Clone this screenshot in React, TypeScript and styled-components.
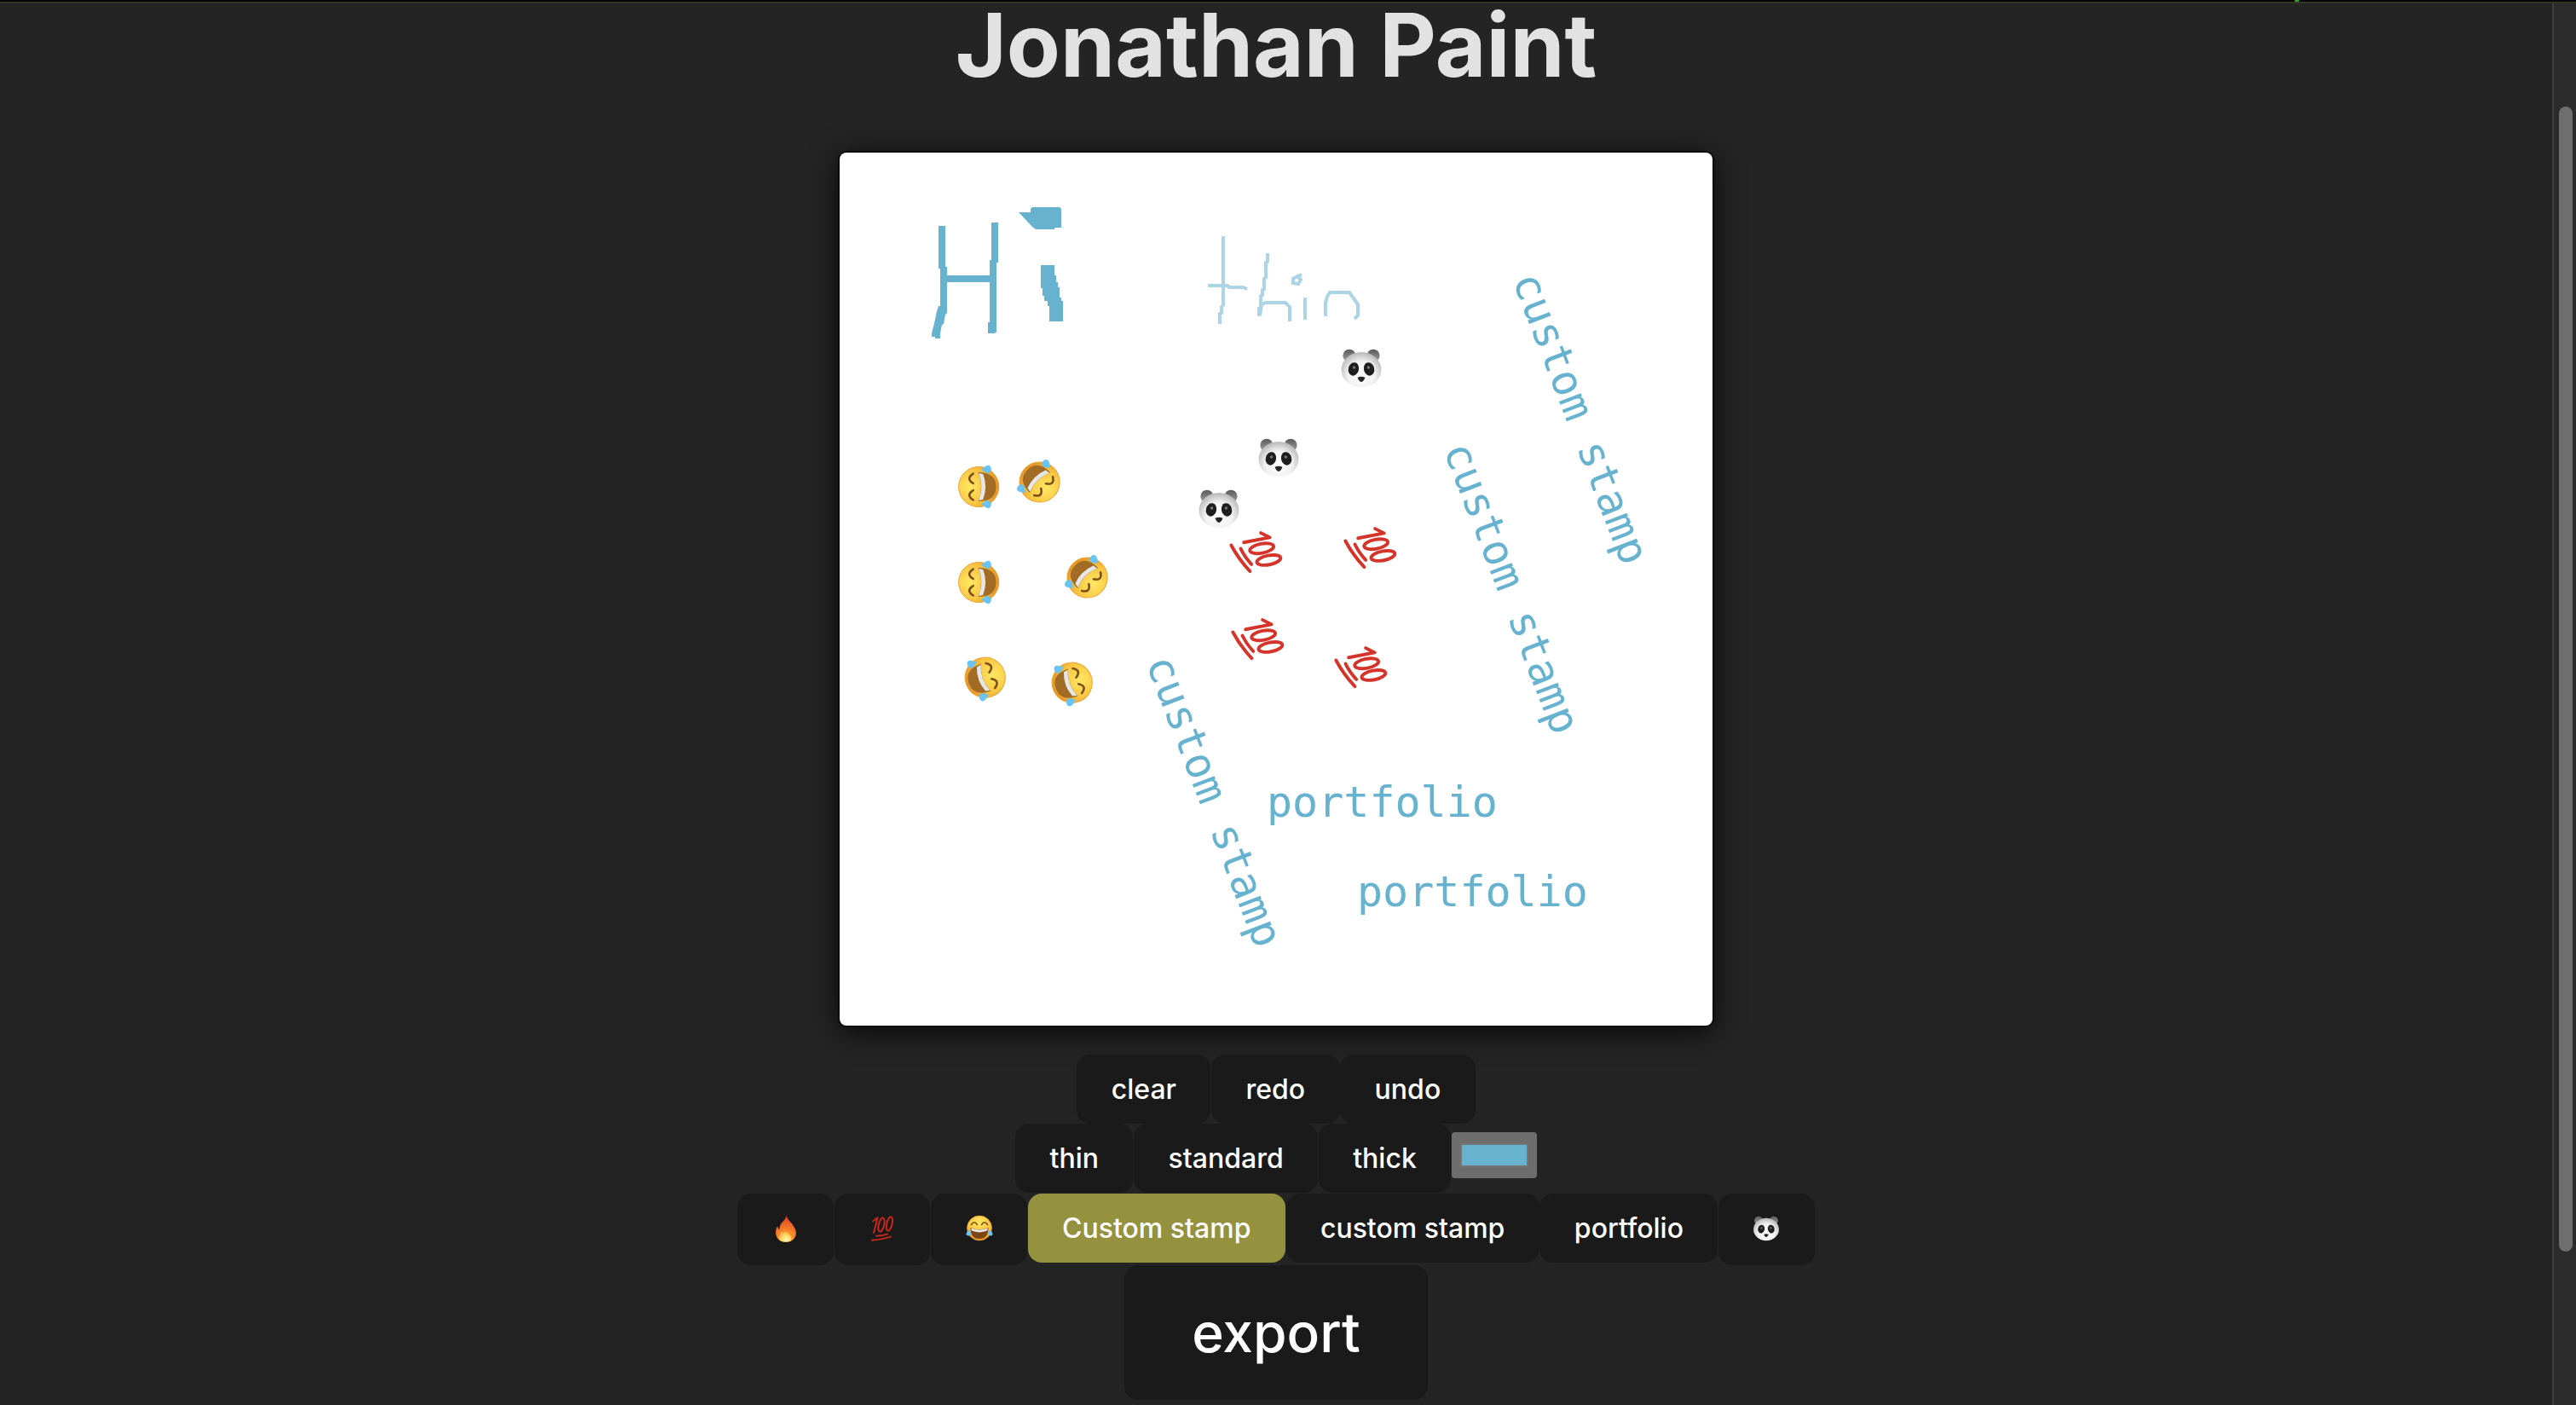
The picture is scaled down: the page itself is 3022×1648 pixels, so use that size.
import styled, { createGlobalStyle } from "styled-components";

const INK = "#67b2cf";

const GlobalStyle = createGlobalStyle`
  html, body {
    margin: 0;
    padding: 0;
    background: #242424;
    overflow: hidden;
  }
  body {
    font-family: Inter, "Liberation Sans", sans-serif;
    font-size: 32px;
  }
`;

const Frame = styled.div`
  width: 3022px;
  height: 1648px;
  display: flex;
  flex-direction: column;
  overflow: hidden;
  background: #242424;
`;

const TopStrip = styled.div`
  height: 2px;
  flex: none;
  background: #050505;
  border-bottom: 2px solid #2f3a26;
  display: flex;
`;

const StripTick = styled.div`
  margin-left: 2692px;
  width: 5px;
  height: 2px;
  background: #3f9a30;
`;

const Body = styled.div`
  flex: 1;
  display: flex;
  min-height: 0;
`;

const Main = styled.main`
  flex: 1;
  display: flex;
  flex-direction: column;
  align-items: center;
`;

const Title = styled.h1`
  margin: 0 0 77px;
  font-size: 103px;
  line-height: 98px;
  font-weight: 700;
  color: rgba(255, 255, 255, 0.87);
`;

const Canvas = styled.svg`
  display: block;
  flex: none;
  width: 1024px;
  height: 1024px;
  background: #fff;
  border-radius: 8px;
  box-shadow: 0 0 0 2px #0c0c0c, 0 6px 34px rgba(0, 0, 0, 0.85);
  margin-bottom: 34px;
`;

const Row = styled.div<{ $height: number }>`
  display: flex;
  align-items: flex-start;
  justify-content: center;
  gap: 0.7px;
  height: ${(p) => p.$height}px;
`;

const Button = styled.button<{ $active?: boolean }>`
  border-radius: 16px;
  border: 2px solid transparent;
  padding: 19.2px 38.4px;
  font-family: inherit;
  font-size: 32px;
  font-weight: 500;
  color: #fff;
  background: ${(p) => (p.$active ? "#94923f" : "#1a1a1a")};
  white-space: nowrap;
`;

const ExportButton = styled(Button)`
  font-size: 64px;
  padding: 38.4px 76.8px;
  border-radius: 16px;
`;

const EmojiIcon = styled.svg`
  display: block;
  width: 32px;
  height: 32px;
  margin: 4px 0 5.6px;
`;

const Swatch = styled.div`
  margin-top: 10px;
  width: 100px;
  height: 54px;
  box-sizing: border-box;
  padding: 13px 10px;
  background: #6d6d6d;
  border-radius: 4px;
  display: flex;
`;

const SwatchInner = styled.div`
  flex: 1;
  background: ${INK};
  border: 2px solid #757575;
`;

const StampText = styled.text`
  font-family: "DejaVu Sans Mono", monospace;
  font-size: 50px;
  fill: ${INK};
`;

const GradientDefs = styled.svg`
  display: block;
  width: 0;
  height: 0;
`;

const ScrollTrack = styled.div`
  flex: none;
  width: 28px;
  box-sizing: border-box;
  background: #2c2c2c;
  border-left: 2px solid #3f3f3f;
  padding: 121px 4px 0 6px;
`;

const ScrollThumb = styled.div`
  height: 1343px;
  background: #6e6e6e;
  border-radius: 8px;
`;

function Fire() {
  return (
    <g>
      <path
        d="M16.5 0C17 5 22 8 24.6 12.5C27.5 17 29 21 27 25.6C25 30 21 32 16 32C11 32 7 30 5 25.6C3.4 21.6 3.6 17 6.2 13C6.4 15.4 7.2 16.6 8.6 17.2C8 12 11 9.4 13 7.2C15 5 16.4 3 16.5 0Z"
        fill="url(#fireGlow)"
      />
      <path d="M9 30C6.5 25 9 21 12 18C12 21 13 22 15 18.5C19 22 24 25 22 30C20 32 12 32 9 30Z" fill="url(#fireCore)" />
    </g>
  );
}

function Hundred({ color, weight = 2 }: { color: string; weight?: number }) {
  return (
    <g fill="none" stroke={color} strokeLinecap="round" strokeWidth={weight}>
      <path d="M5 7.5L10.5 3.2L6 21" strokeLinejoin="round" />
      <ellipse cx="15" cy="11.5" rx="3.2" ry="8.4" transform="rotate(14 15 11.5)" />
      <ellipse cx="24.4" cy="10.5" rx="3.2" ry="8.4" transform="rotate(14 24.4 10.5)" />
      <path d="M9 24.8Q15 24.8 22 22.6" />
      <path d="M4 29.8Q15 29.2 26 25.6" />
    </g>
  );
}

function Laugh({ mouth = "#7c4513" }: { mouth?: string }) {
  return (
    <g>
      <circle cx="16" cy="15.5" r="14.5" fill="url(#laughFace)" stroke="#e8a032" strokeWidth="0.6" />
      <path d="M6.5 11.5Q10 6 13.5 11.5M18.5 11.5Q22 6 25.5 11.5" fill="none" stroke="#7a5018" strokeWidth="1.6" strokeLinecap="round" />
      <path d="M5.5 15Q16 19.5 26.5 15Q26.5 28 16 28Q5.5 28 5.5 15Z" fill={mouth} />
      <path d="M6.2 15.4Q16 19.4 25.8 15.4L25.2 18.6Q16 22.2 6.8 18.6Z" fill="#e4e6e8" />
      <path d="M3.5 17.5C5.5 20 6.5 21.5 6 23C5.2 24.8 2 25 .8 23.4C-.2 21.8 1.6 19.5 3.5 17.5Z" fill="#69c3f5" />
      <path d="M28.5 17.5C26.5 20 25.5 21.5 26 23C26.8 24.8 30 25 31.2 23.4C32.2 21.8 30.4 19.5 28.5 17.5Z" fill="#69c3f5" />
    </g>
  );
}

function Panda() {
  return (
    <g>
      <circle cx="7" cy="6.5" r="4.8" fill="url(#pandaEar)" />
      <circle cx="25" cy="6.5" r="4.8" fill="url(#pandaEar)" />
      <ellipse cx="16" cy="17" rx="15" ry="13.2" fill="url(#pandaHead)" />
      <ellipse cx="10.2" cy="16.6" rx="3.9" ry="5" transform="rotate(14 10.2 16.6)" fill="#1f1f1f" />
      <ellipse cx="21.8" cy="16.6" rx="3.9" ry="5" transform="rotate(-14 21.8 16.6)" fill="#1f1f1f" />
      <circle cx="10.6" cy="15.4" r="1.1" fill="#777" />
      <circle cx="21.4" cy="15.4" r="1.1" fill="#777" />
      <path d="M13.2 22.8Q16 21.6 18.8 22.8Q18 25.6 16 26.2Q14 25.6 13.2 22.8Z" fill="#262626" />
    </g>
  );
}

type StampProps = { x: number; y: number; size: number; rotate?: number; children: React.ReactNode };

function Stamp({ x, y, size, rotate = 0, children }: StampProps) {
  return <g transform={`translate(${x} ${y}) rotate(${rotate}) scale(${size / 32}) translate(-16 -16)`}>{children}</g>;
}

const laughs = [
  { x: 1149, y: 571, rotate: -90 },
  { x: 1219, y: 565, rotate: 135 },
  { x: 1149, y: 683, rotate: -90 },
  { x: 1275, y: 677, rotate: 135 },
  { x: 1155, y: 795, rotate: 70 },
  { x: 1257, y: 801, rotate: 70 },
];

const hundreds = [
  { x: 1474, y: 648 },
  { x: 1608, y: 643 },
  { x: 1476, y: 750 },
  { x: 1597, y: 783 },
];

const pandas = [
  { x: 1597, y: 432 },
  { x: 1500, y: 537 },
  { x: 1430, y: 597 },
];

const customStamps = [
  { x: 1344, y: 777 },
  { x: 1693, y: 527 },
  { x: 1774, y: 328 },
];

const portfolios = [
  { x: 1486, y: 958 },
  { x: 1592, y: 1063 },
];

function Drawing() {
  return (
    <Canvas viewBox="985 179 1024 1024">
      <g fill="none" stroke={INK} strokeWidth="8">
        <path d="M1105 265V315M1107 313V367" />
        <path d="M1167 261V308M1165 305V390M1163 378V391" />
        <path d="M1111 327H1161" />
      </g>
      <g fill={INK}>
        <path d="M1101 359H1111V367L1109 369L1107 380L1105 381L1103 391V397H1097V395H1093V391L1095 383L1097 375L1099 365Z" />
        <path d="M1195 249H1209V245L1211 243H1243L1245 245V267H1237V269H1215L1211 266Z" />
        <path d="M1221 311H1237V323H1239V331H1241V337H1243V349H1245V353H1247V377H1231V359H1229V353H1225V347H1223V338H1221Z" />
      </g>
      <g fill="none" stroke={INK} strokeWidth="4" opacity="0.55">
        <path d="M1435 277V358L1433 360V367L1431 368V380" />
        <path d="M1417 335H1440L1442 337H1458L1463 339" />
        <path d="M1487 297V307L1485 308V325L1483 327V339L1481 340V346L1479 347V360L1477 362V371" />
        <path d="M1478 370L1480 358L1484 355H1508L1513 360V377" />
        <path d="M1527 322L1522 324L1517 327L1517 332L1523 333L1526 328L1523 325" />
        <path d="M1531 349V375" />
        <path d="M1555 371V355L1557 348L1560 343H1583L1588 350L1593 357V370L1589 374" />
      </g>
      {pandas.map((p) => (
        <Stamp key={`${p.x}-${p.y}`} x={p.x} y={p.y} size={50}>
          <Panda />
        </Stamp>
      ))}
      {laughs.map((p) => (
        <Stamp key={`${p.x}-${p.y}`} x={p.x} y={p.y} size={52} rotate={p.rotate}>
          <Laugh mouth="#a26c24" />
        </Stamp>
      ))}
      {hundreds.map((p) => (
        <Stamp key={`${p.x}-${p.y}`} x={p.x} y={p.y} size={54} rotate={65}>
          <Hundred color="#d5342a" weight={2.3} />
        </Stamp>
      ))}
      {customStamps.map((p) => (
        <StampText key={p.x} x={p.x} y={p.y} transform={`rotate(69 ${p.x} ${p.y})`}>
          custom stamp
        </StampText>
      ))}
      {portfolios.map((p) => (
        <StampText key={p.x} x={p.x} y={p.y}>
          portfolio
        </StampText>
      ))}
    </Canvas>
  );
}

export default function App() {
  return (
    <Frame>
      <GlobalStyle />
      <GradientDefs>
        <defs>
          <radialGradient id="fireGlow" gradientUnits="userSpaceOnUse" cx="16" cy="28" r="28">
            <stop offset="0" stopColor="#ffb53a" />
            <stop offset="0.45" stopColor="#f27a26" />
            <stop offset="1" stopColor="#d8352a" />
          </radialGradient>
          <radialGradient id="fireCore" gradientUnits="userSpaceOnUse" cx="16" cy="29" r="11">
            <stop offset="0" stopColor="#fff6b8" />
            <stop offset="0.55" stopColor="#ffd45c" />
            <stop offset="1" stopColor="#f8922e" />
          </radialGradient>
          <radialGradient id="laughFace" gradientUnits="userSpaceOnUse" cx="16" cy="9" r="22">
            <stop offset="0" stopColor="#ffe763" />
            <stop offset="0.6" stopColor="#f8c440" />
            <stop offset="1" stopColor="#e08a24" />
          </radialGradient>
          <radialGradient id="pandaHead" gradientUnits="userSpaceOnUse" cx="16" cy="21" r="17">
            <stop offset="0" stopColor="#ffffff" />
            <stop offset="0.6" stopColor="#f2f2f2" />
            <stop offset="1" stopColor="#b8b8b8" />
          </radialGradient>
          <linearGradient id="pandaEar" x1="0" y1="0" x2="0" y2="1">
            <stop offset="0" stopColor="#5a5a5a" />
            <stop offset="1" stopColor="#a0a0a0" />
          </linearGradient>
        </defs>
      </GradientDefs>
      <TopStrip>
        <StripTick />
      </TopStrip>
      <Body>
        <Main>
          <Title>Jonathan Paint</Title>
          <Drawing />
          <Row $height={81}>
            <Button>clear</Button>
            <Button>redo</Button>
            <Button>undo</Button>
          </Row>
          <Row $height={82}>
            <Button>thin</Button>
            <Button>standard</Button>
            <Button>thick</Button>
            <Swatch>
              <SwatchInner />
            </Swatch>
          </Row>
          <Row $height={84}>
            <Button>
              <EmojiIcon viewBox="0 0 32 32">
                <Fire />
              </EmojiIcon>
            </Button>
            <Button>
              <EmojiIcon viewBox="0 0 32 32">
                <Hundred color="#c9281c" />
              </EmojiIcon>
            </Button>
            <Button>
              <EmojiIcon viewBox="0 0 32 32">
                <Laugh />
              </EmojiIcon>
            </Button>
            <Button $active>Custom stamp</Button>
            <Button>custom stamp</Button>
            <Button>portfolio</Button>
            <Button>
              <EmojiIcon viewBox="0 0 32 32">
                <Panda />
              </EmojiIcon>
            </Button>
          </Row>
          <ExportButton>export</ExportButton>
        </Main>
        <ScrollTrack>
          <ScrollThumb />
        </ScrollTrack>
      </Body>
    </Frame>
  );
}
